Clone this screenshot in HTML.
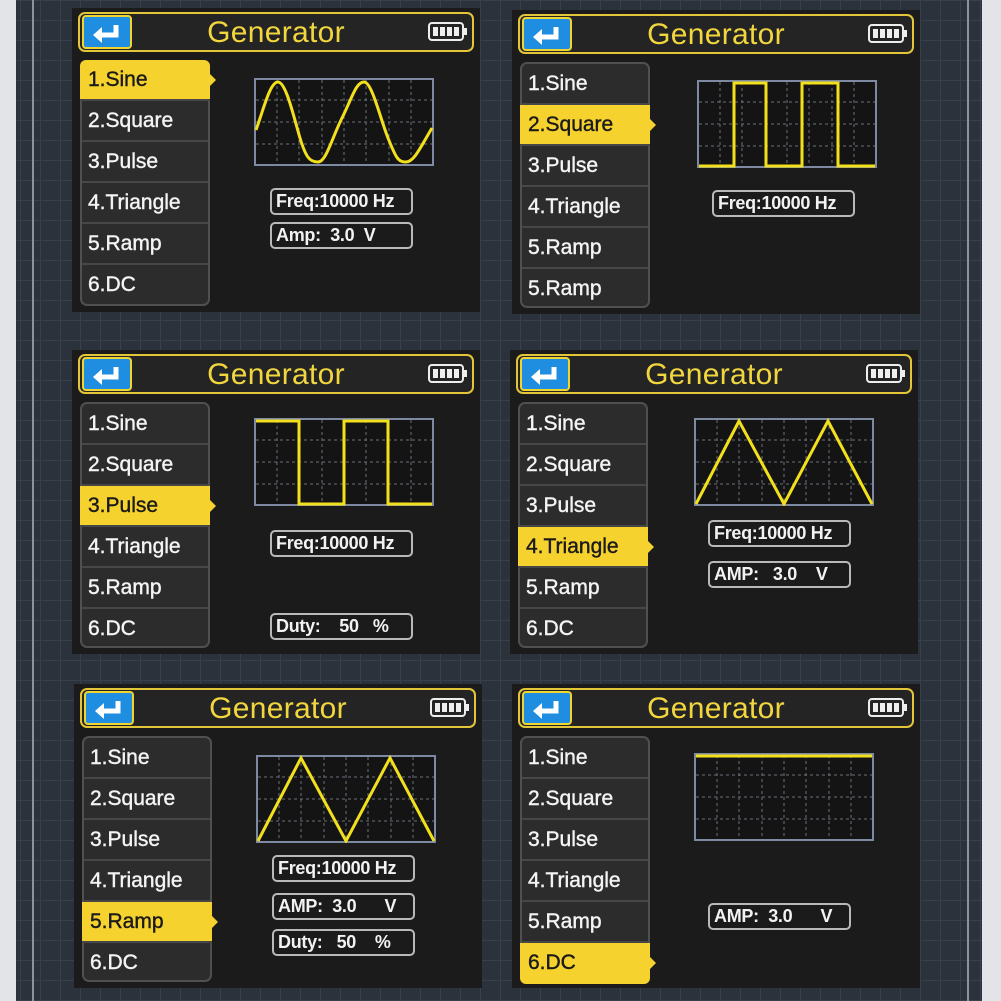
<!DOCTYPE html>
<html><head><meta charset="utf-8"><style>
*{margin:0;padding:0;box-sizing:border-box}
body{width:1001px;height:1001px;overflow:hidden;position:relative;font-family:"Liberation Sans",sans-serif;
background-color:#2b323c;
background-image:linear-gradient(#37404b 1px,transparent 1px),linear-gradient(90deg,#37404b 1px,transparent 1px);
background-size:20px 20px;}
.edgeL{position:absolute;left:0;top:0;width:16px;height:1001px;background:#e2e4e7}
.edgeR{position:absolute;right:0;top:0;width:19px;height:1001px;background:#e2e4e7}
.vl{position:absolute;top:0;width:2px;height:1001px;background:#8d939b}
.p{position:absolute;width:408px;height:304px;background:#1b1b1b}
.hd{position:absolute;left:6px;top:4px;width:396px;height:40px;border:2px solid #e3c53a;border-radius:7px;background:#242424}
.bk{position:absolute;left:2px;top:1px;width:50px;height:34px;background:#1f8ee0;border:2px solid #f2d42e;border-radius:4px}
.tt{position:absolute;left:0;right:0;top:2px;text-align:center;color:#f2d63e;font-size:30px;letter-spacing:0.3px}
.bat{position:absolute;left:348px;top:8px;width:36px;height:19px;border:2px solid #eee;border-radius:4px}
.bat i{position:absolute;top:3px;width:5px;height:9px;background:#eee}
.bat:after{content:"";position:absolute;right:-5px;top:4px;width:3px;height:7px;background:#eee}
.mn{position:absolute;left:8px;top:52px;width:130px;height:246px;background:#2c2c2c;border:2px solid #505050;border-radius:7px}
.mn div{position:relative;height:41px;line-height:40px;border-bottom:2px solid #474747;color:#f4f4f4;font-size:21px;padding-left:6px;-webkit-text-stroke:0.4px currentColor}
.mn div:last-child{border-bottom:none}
.mn div.s{background:#f6d22e;color:#1a1a1a;margin:0 -2px;padding-left:8px}
.mn div.s:after{content:"";position:absolute;right:-6px;top:14px;border-left:6px solid #f6d22e;border-top:6px solid transparent;border-bottom:6px solid transparent}
.mn div:first-child.s{border-radius:6px 6px 0 0;margin-top:-2px}
.mn div:last-child.s{border-radius:0 0 6px 6px}
.sc{position:absolute;left:182px;top:70px;width:180px;height:88px}
.lb{position:absolute;left:198px;width:143px;height:27px;border:2px solid #b9b9b9;border-radius:5px;color:#f2f2f2;font-size:18px;font-weight:bold;line-height:23px;padding-left:4px;white-space:pre;letter-spacing:-0.3px}
</style></head><body>
<div class="edgeL"></div><div class="edgeR"></div>
<div class="vl" style="left:32px"></div><div class="vl" style="left:967px"></div>

<svg width="0" height="0" style="position:absolute"><defs>
<g id="grid">
<rect x="1" y="1" width="178" height="86" fill="#141414" stroke="#7d8aa2" stroke-width="2"/>
<g stroke="#6a6f78" stroke-width="1" stroke-dasharray="3 3">
<line x1="23" y1="2" x2="23" y2="86"/><line x1="45" y1="2" x2="45" y2="86"/><line x1="68" y1="2" x2="68" y2="86"/><line x1="90" y1="2" x2="90" y2="86"/><line x1="112" y1="2" x2="112" y2="86"/><line x1="135" y1="2" x2="135" y2="86"/><line x1="157" y1="2" x2="157" y2="86"/>
<line x1="2" y1="22" x2="178" y2="22"/><line x1="2" y1="44" x2="178" y2="44"/><line x1="2" y1="66" x2="178" y2="66"/>
</g></g>
</defs></svg>

<!-- P1 -->
<div class="p" style="left:72px;top:8px">
<div class="hd"><div class="bk"><svg width="46" height="30"><path d="M32 8v10H16" fill="none" stroke="#fff" stroke-width="5"/><path d="M9 18l9-8v16z" fill="#fff"/></svg></div><div class="tt">Generator</div><div class="bat"><i style="left:3px"></i><i style="left:10px"></i><i style="left:17px"></i><i style="left:24px"></i></div></div>
<div class="mn"><div class="s">1.Sine</div><div>2.Square</div><div>3.Pulse</div><div>4.Triangle</div><div>5.Ramp</div><div>6.DC</div></div>
<svg class="sc" viewBox="0 0 180 88"><use href="#grid"/><path d="M2 52 C10 30,16 4,24 4 S40 40,46 60 S56 84,64 84 S78 60,88 40 S102 4,110 4 S126 40,134 60 S144 84,152 84 S166 70,178 50" fill="none" stroke="#f3e01c" stroke-width="3"/></svg>
<div class="lb" style="top:180px">Freq:10000 Hz</div>
<div class="lb" style="top:214px">Amp:  3.0  V</div>
</div>

<!-- P2 -->
<div class="p" style="left:512px;top:10px">
<div class="hd"><div class="bk"><svg width="46" height="30"><path d="M32 8v10H16" fill="none" stroke="#fff" stroke-width="5"/><path d="M9 18l9-8v16z" fill="#fff"/></svg></div><div class="tt">Generator</div><div class="bat"><i style="left:3px"></i><i style="left:10px"></i><i style="left:17px"></i><i style="left:24px"></i></div></div>
<div class="mn"><div>1.Sine</div><div class="s">2.Square</div><div>3.Pulse</div><div>4.Triangle</div><div>5.Ramp</div><div>5.Ramp</div></div>
<svg class="sc" style="left:185px" viewBox="0 0 180 88"><use href="#grid"/><path d="M2 86H37V3H69V86H105V3H141V86H178" fill="none" stroke="#f3e01c" stroke-width="3"/></svg>
<div class="lb" style="top:180px;left:200px">Freq:10000 Hz</div>
</div>

<!-- P3 -->
<div class="p" style="left:72px;top:350px">
<div class="hd"><div class="bk"><svg width="46" height="30"><path d="M32 8v10H16" fill="none" stroke="#fff" stroke-width="5"/><path d="M9 18l9-8v16z" fill="#fff"/></svg></div><div class="tt">Generator</div><div class="bat"><i style="left:3px"></i><i style="left:10px"></i><i style="left:17px"></i><i style="left:24px"></i></div></div>
<div class="mn"><div>1.Sine</div><div>2.Square</div><div class="s">3.Pulse</div><div>4.Triangle</div><div>5.Ramp</div><div>6.DC</div></div>
<svg class="sc" style="top:68px" viewBox="0 0 180 88"><use href="#grid"/><path d="M2 3H45V86H90V3H134V86H178" fill="none" stroke="#f3e01c" stroke-width="3"/></svg>
<div class="lb" style="top:180px">Freq:10000 Hz</div>
<div class="lb" style="top:263px">Duty:    50   %</div>
</div>

<!-- P4 -->
<div class="p" style="left:510px;top:350px">
<div class="hd"><div class="bk"><svg width="46" height="30"><path d="M32 8v10H16" fill="none" stroke="#fff" stroke-width="5"/><path d="M9 18l9-8v16z" fill="#fff"/></svg></div><div class="tt">Generator</div><div class="bat"><i style="left:3px"></i><i style="left:10px"></i><i style="left:17px"></i><i style="left:24px"></i></div></div>
<div class="mn"><div>1.Sine</div><div>2.Square</div><div>3.Pulse</div><div class="s">4.Triangle</div><div>5.Ramp</div><div>6.DC</div></div>
<svg class="sc" style="left:184px;top:68px" viewBox="0 0 180 88"><use href="#grid"/><path d="M2 86L45 3L90 86L134 3L178 86" fill="none" stroke="#f3e01c" stroke-width="3"/></svg>
<div class="lb" style="top:170px;left:198px">Freq:10000 Hz</div>
<div class="lb" style="top:211px;left:198px">AMP:   3.0    V</div>
</div>

<!-- P5 -->
<div class="p" style="left:74px;top:684px">
<div class="hd"><div class="bk"><svg width="46" height="30"><path d="M32 8v10H16" fill="none" stroke="#fff" stroke-width="5"/><path d="M9 18l9-8v16z" fill="#fff"/></svg></div><div class="tt">Generator</div><div class="bat"><i style="left:3px"></i><i style="left:10px"></i><i style="left:17px"></i><i style="left:24px"></i></div></div>
<div class="mn"><div>1.Sine</div><div>2.Square</div><div>3.Pulse</div><div>4.Triangle</div><div class="s">5.Ramp</div><div>6.DC</div></div>
<svg class="sc" style="top:71px" viewBox="0 0 180 88"><use href="#grid"/><path d="M2 86L45 3L90 86L134 3L178 86" fill="none" stroke="#f3e01c" stroke-width="3"/></svg>
<div class="lb" style="top:171px">Freq:10000 Hz</div>
<div class="lb" style="top:209px">AMP:  3.0      V</div>
<div class="lb" style="top:245px">Duty:   50    %</div>
</div>

<!-- P6 -->
<div class="p" style="left:512px;top:684px">
<div class="hd"><div class="bk"><svg width="46" height="30"><path d="M32 8v10H16" fill="none" stroke="#fff" stroke-width="5"/><path d="M9 18l9-8v16z" fill="#fff"/></svg></div><div class="tt">Generator</div><div class="bat"><i style="left:3px"></i><i style="left:10px"></i><i style="left:17px"></i><i style="left:24px"></i></div></div>
<div class="mn"><div>1.Sine</div><div>2.Square</div><div>3.Pulse</div><div>4.Triangle</div><div>5.Ramp</div><div class="s">6.DC</div></div>
<svg class="sc" style="top:69px" viewBox="0 0 180 88"><use href="#grid"/><path d="M2 3H178" fill="none" stroke="#f3e01c" stroke-width="3"/></svg>
<div class="lb" style="top:219px;left:196px">AMP:  3.0      V</div>
</div>
</body></html>
